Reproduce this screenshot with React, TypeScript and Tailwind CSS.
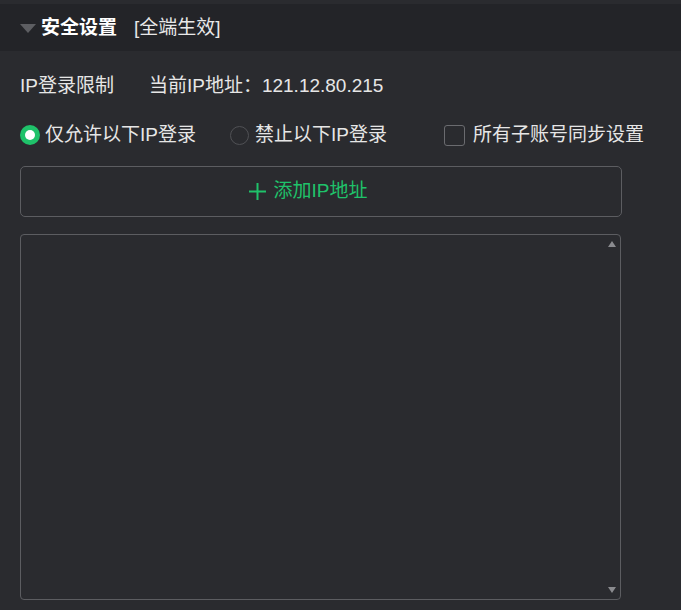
import React from "react";

export default function App() {
  const font = { fontFamily: '"Liberation Sans", "Noto Sans CJK SC", sans-serif' };
  return (
    <div className="w-[681px] h-[610px] bg-[#2a2b2f] pt-[4px] text-[#e6e6e6]" style={font}>
      <div className="h-[47px] bg-[#232428] flex items-center pl-[20px]">
        <svg width="16" height="10" viewBox="0 0 16 10" className="mr-[5px] mt-[2px]">
          <path d="M0 0 L16 0 L8 9 Z" fill="#5d5e62" />
        </svg>
        <span className="text-[19px] font-bold text-white leading-[24px]">安全设置</span>
        <span className="text-[19px] ml-[17px] text-[#e8e8e8] leading-[24px]">[全端生效]</span>
      </div>
      <div className="px-[20px]">
        <div className="flex items-center h-[24px] mt-[23px] text-[19px]">
          <span>IP登录限制</span>
          <span className="ml-[35px]">当前IP地址：121.12.80.215</span>
        </div>
        <div className="flex items-center h-[24px] mt-[25px] text-[19px]">
          <div className="w-[20px] h-[20px] rounded-full bg-[#1fc26a] flex items-center justify-center">
            <div className="w-[10px] h-[10px] rounded-full bg-white" />
          </div>
          <span className="ml-[5px]">仅允许以下IP登录</span>
          <div className="ml-[34px] w-[19px] h-[19px] rounded-full border border-[#505155]" />
          <span className="ml-[6px]">禁止以下IP登录</span>
          <div className="ml-[57px] w-[21px] h-[21px] rounded-[3px] border border-[#6a6b6f]" />
          <span className="ml-[8px]">所有子账号同步设置</span>
        </div>
        <div className="mt-[19px] w-[602px] h-[51px] rounded-[5px] border border-[#5c5d61] flex items-center justify-center pr-[26px] text-[#1fc26a] text-[19px]">
          <svg width="17" height="17" viewBox="0 0 17 17" className="mr-[8px]">
            <path d="M8.5 0 V17 M0 8.5 H17" stroke="#1fc26a" strokeWidth="2" />
          </svg>
          <span>添加IP地址</span>
        </div>
        <div className="mt-[17px] w-[601px] h-[366px] rounded-[4px] border border-[#5c5d61] relative">
          <svg width="8" height="6" viewBox="0 0 8 6" className="absolute right-[4px] top-[6px]">
            <path d="M0 6 L4 0 L8 6 Z" fill="#8a8b8f" />
          </svg>
          <svg width="8" height="6" viewBox="0 0 8 6" className="absolute right-[4px] bottom-[6px]">
            <path d="M0 0 L8 0 L4 6 Z" fill="#8a8b8f" />
          </svg>
        </div>
      </div>
    </div>
  );
}
